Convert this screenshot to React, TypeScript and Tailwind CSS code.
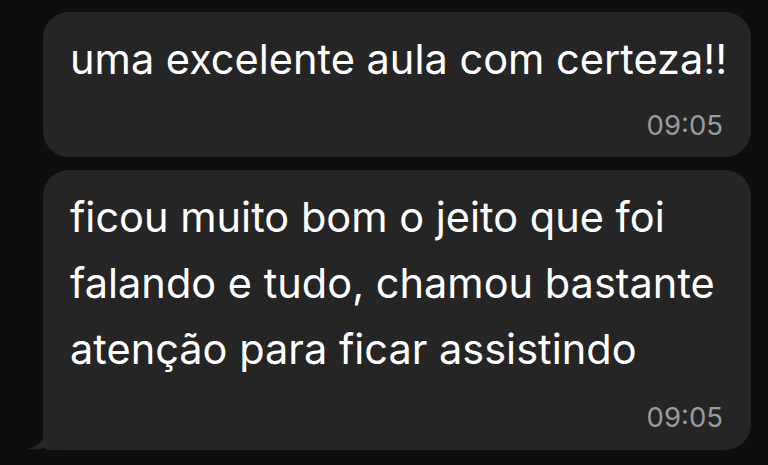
import React from "react";

const font = { fontFamily: "Inter, 'Liberation Sans', sans-serif" };

export default function App() {
  return (
    <div
      className="w-[768px] h-[465px] overflow-hidden bg-[#0c0f0d] flex flex-col gap-[13px] pl-[43px] pr-[17px] pt-[12px]"
      style={font}
    >
      <div className="relative bg-[#252525] rounded-[26px] pl-[27px] pr-[28px] pt-[14px] pb-[15px] flex flex-col">
        <div className="text-white text-[41.5px] leading-[66px] whitespace-nowrap">uma excelente aula com certeza!!</div>
        <div className="self-end text-[#9b9b9b] text-[27.5px] leading-[34px] mt-[16px]">09:05</div>
      </div>
      <div className="relative bg-[#252525] rounded-[26px] rounded-bl-[6px] pl-[27px] pr-[28px] pt-[14px] pb-[16px] flex flex-col">
        <div className="text-white text-[41.5px] leading-[66px] whitespace-nowrap">
          <div>ficou muito bom o jeito que foi</div>
          <div>falando e tudo, chamou bastante</div>
          <div>atenção para ficar assistindo</div>
        </div>
        <div className="self-end text-[#9b9b9b] text-[27.5px] leading-[34px] mt-[18px]">09:05</div>
        <svg className="absolute left-[-16px] bottom-0" width="40" height="22" viewBox="0 0 40 22">
          <path d="M16 0 L16 8 C16 14 10 19 0 21 C8 22 18 21 24 18 C28 21 34 22 40 22 L40 0 Z" fill="#252525" />
        </svg>
      </div>
    </div>
  );
}
